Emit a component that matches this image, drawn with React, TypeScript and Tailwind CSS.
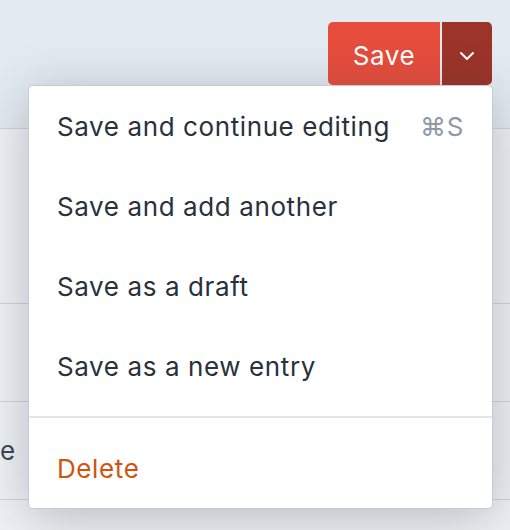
const items = ['Save and continue editing', 'Save and add another', 'Save as a draft', 'Save as a new entry']

export default function App() {
  return (
    <div className="relative h-[530px] w-[510px] overflow-hidden bg-[#eef1f4] font-['Inter',sans-serif] text-[26px] tracking-[0.6px] text-[#28313c]">
      <header className="flex h-[129px] justify-end border-b border-[#cfd5dc] bg-[#e4eaf1] pt-[22px] pr-[18px]">
        <div className="flex h-[63px]">
          <button className="w-[112px] rounded-l-[5px] bg-[#e64d3d] pt-[3px] text-white">Save</button>
          <button className="ml-[2px] flex w-[50px] items-center justify-center rounded-r-[5px] bg-[#9c3429] pt-[4px]">
            <svg width="14" height="8" viewBox="0 0 14 8" fill="none" stroke="white" strokeWidth="2" strokeLinecap="round" strokeLinejoin="round">
              <polyline points="1,1 7,7 13,1" />
            </svg>
          </button>
        </div>
      </header>
      <div className="h-[175px] border-b border-[#d0d4d9]" />
      <div className="h-[98px] border-b border-[#d0d4d9]" />
      <div className="flex h-[98px] items-center border-b border-[#d0d4d9] text-[#3b4756]">
        <span>e</span>
      </div>

      <div className="absolute top-[85px] left-[28px] w-[465px] rounded-[5px] border border-[#c6cbd1] bg-white shadow-[0_8px_50px_rgba(40,50,60,0.28)]">
        <ul className="pb-[10px]">
          {items.map((label, i) => (
            <li key={label} className="flex h-[80px] items-center justify-between pr-[28px] pl-[28px]">
              <span>{label}</span>
              {i === 0 && <span className="text-[#8d99a6]">⌘S</span>}
            </li>
          ))}
        </ul>
        <div className="border-t-2 border-[#e4e6e9] pt-[10px]">
          <div className="flex h-[80px] items-center pl-[28px] text-[#d0540f]">Delete</div>
        </div>
      </div>
    </div>
  )
}
